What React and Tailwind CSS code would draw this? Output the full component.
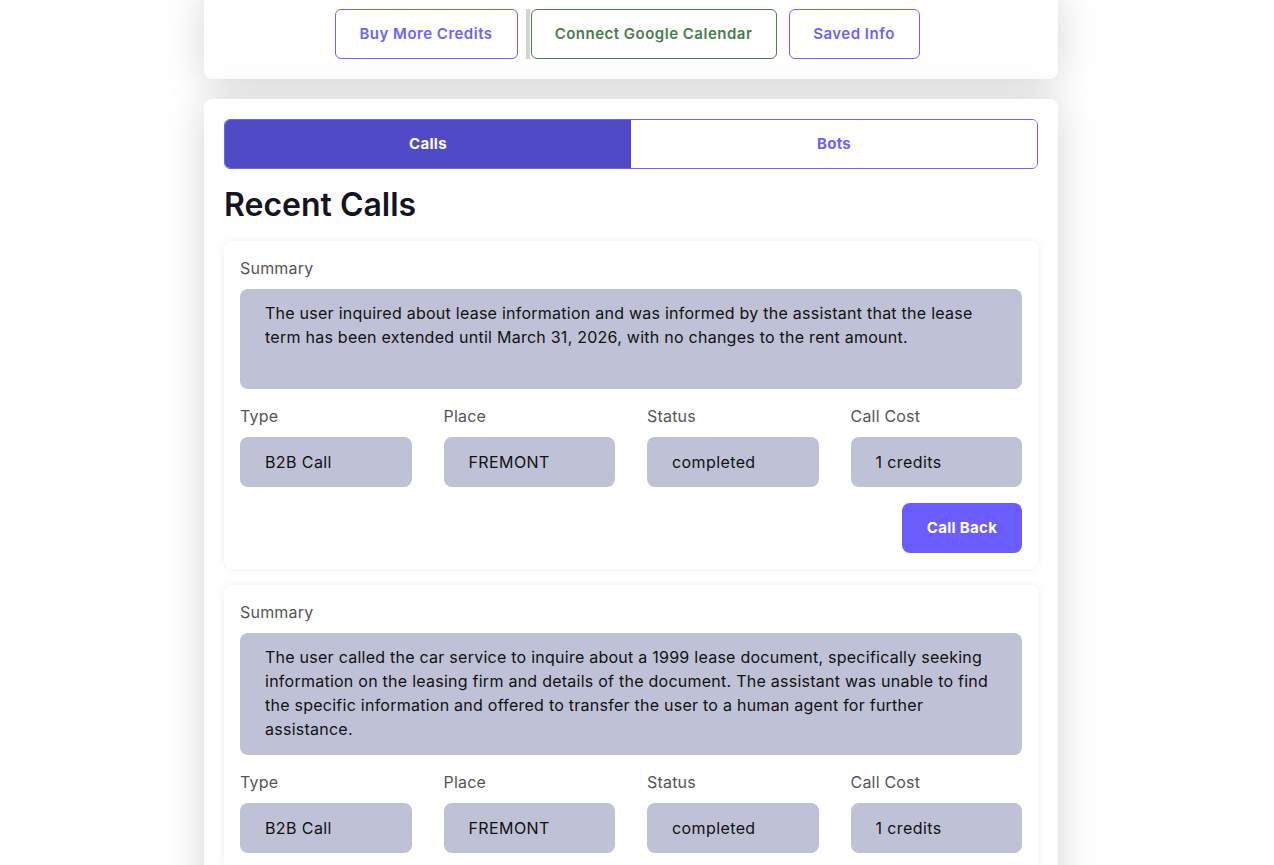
import React from "react";

const font = { fontFamily: "Inter, 'Noto Sans', sans-serif" };

function Field({ label, value }) {
  return (
    <div className="flex flex-col">
      <div className="text-[16px] leading-6 text-[#555] mb-[9px] tracking-[0.2px]">{label}</div>
      <div className="h-[50px] rounded-lg bg-[#bfc1d6] pl-[25px] flex items-center text-[16px] text-[#111] tracking-[0.4px]">
        {value}
      </div>
    </div>
  );
}

function CallCard({ lines, callBack }) {
  return (
    <div className="rounded-lg bg-white shadow-[0_0_8px_rgba(0,0,0,0.07)] px-4 pt-[15px] pb-4">
      <div className="text-[16px] leading-6 text-[#555] mb-[9px] tracking-[0.2px]">Summary</div>
      <div className="min-h-[100px] rounded-lg bg-[#bfc1d6] px-[25px] pt-3 pb-[14px] text-[16px] leading-6 text-[#111] tracking-[0.25px]">
        {lines.map((l, i) => (
          <div key={i} className="whitespace-nowrap">{l}</div>
        ))}
      </div>
      <div className="grid grid-cols-4 gap-8 mt-[15px]">
        <Field label="Type" value="B2B Call" />
        <Field label="Place" value="FREMONT" />
        <Field label="Status" value="completed" />
        <Field label="Call Cost" value="1 credits" />
      </div>
      {callBack && (
        <div className="flex justify-end mt-4">
          <button className="w-[120px] h-[50px] rounded-lg bg-[#6a5cff] text-white font-bold text-[15px] tracking-[0.3px]">
            Call Back
          </button>
        </div>
      )}
    </div>
  );
}

export default function App() {
  return (
    <div className="min-h-screen bg-white overflow-hidden pr-3" style={font}>
      <div className="w-[854px] mx-auto flex flex-col gap-5">
        <div className="-mt-[11px] bg-white rounded-lg shadow-[0_4px_40px_rgba(0,0,0,0.17)] pt-5 pb-5 pr-2 flex justify-center items-center">
          <button className="h-[50px] w-[183px] rounded-md border border-[#6c63ff] text-[#6c63ff] font-semibold text-[15px] tracking-[0.5px]">
            Buy More Credits
          </button>
          <div className="ml-2 w-[4px] h-[50px] bg-[#d4d4d4]"></div>
          <button className="ml-[1px] h-[50px] w-[246px] rounded-md border border-[#4a7c4e] text-[#4a7c4e] font-semibold text-[15px] tracking-[0.5px]">
            Connect Google Calendar
          </button>
          <button className="ml-3 h-[50px] w-[131px] rounded-md border border-[#6c63ff] text-[#6c63ff] font-semibold text-[15px] tracking-[0.5px]">
            Saved Info
          </button>
        </div>
        <div className="bg-white rounded-lg shadow-[0_4px_40px_rgba(0,0,0,0.17)] px-5 pt-5 pb-10">
          <div className="flex h-[50px] rounded-md border border-[#6c63ff] overflow-hidden">
            <button className="flex-1 bg-[#514ac7] text-white font-bold text-[15px] tracking-[0.3px]">Calls</button>
            <button className="flex-1 bg-white text-[#6c63ff] font-bold text-[15px] tracking-[0.3px]">Bots</button>
          </div>
          <h2 className="mt-4 mb-4 text-[32px] leading-10 font-semibold text-[#15151f]">Recent Calls</h2>
          <div className="flex flex-col gap-4">
            <CallCard
              callBack
              lines={[
                "The user inquired about lease information and was informed by the assistant that the lease",
                "term has been extended until March 31, 2026, with no changes to the rent amount.",
              ]}
            />
            <CallCard
              lines={[
                "The user called the car service to inquire about a 1999 lease document, specifically seeking",
                "information on the leasing firm and details of the document. The assistant was unable to find",
                "the specific information and offered to transfer the user to a human agent for further",
                "assistance.",
              ]}
            />
          </div>
        </div>
      </div>
    </div>
  );
}
